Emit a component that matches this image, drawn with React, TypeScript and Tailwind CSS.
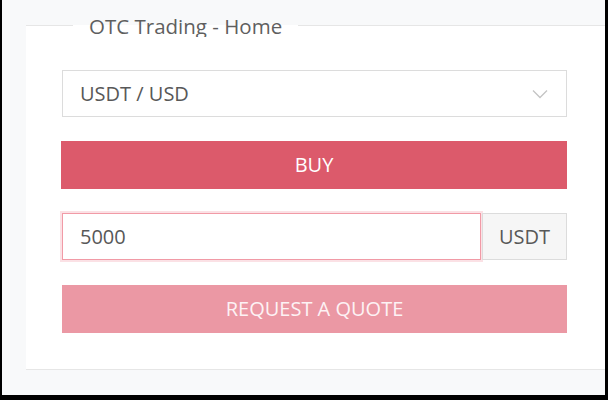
import React from "react";

function Chevron() {
  return (
    <svg width="16" height="10" viewBox="0 0 16 10" fill="none">
      <path d="M1 1.5 L8 8.5 L15 1.5" stroke="#c4c4c4" strokeWidth="1.3" />
    </svg>
  );
}

export default function App() {
  return (
    <div
      className="box-border h-[400px] w-[608px] overflow-hidden border-b-[5px] border-l-2 border-r-[3px] border-black bg-[#f8f9fa]"
      style={{ fontFamily: '"Open Sans", "Liberation Sans", sans-serif' }}
    >
      <div className="pl-[24px] pt-[14px]">
        <fieldset className="m-0 h-[356px] w-[600px] border-0 border-b border-t border-solid border-[#e6e6e6] bg-white px-[36px] pt-[33px]">
          <legend className="ml-[11px] h-[23px] overflow-hidden px-[16px] text-[20.5px] leading-[24px] text-[#5f5f5f]">
            OTC Trading - Home
          </legend>
          <div className="flex w-[505px] flex-col">
            <div className="flex h-[47px] items-center justify-between border border-[#dcdcdc] bg-white pl-[17px] pr-[18px] text-[20px] text-[#585858]">
              <span>USDT / USD</span>
              <Chevron />
            </div>
            <button className="mt-[24px] flex h-[48px] w-[506px] -ml-px items-center justify-center bg-[#dc5a6b] text-[20px] text-white">
              BUY
            </button>
            <div className="mt-[24px] flex h-[47px]">
              <div className="flex w-[419px] items-center border border-[#f19aa6] bg-white pl-[17px] text-[20px] text-[#585858] shadow-[0_0_0_2px_#fbe1e5]">
                5000
              </div>
              <div className="ml-[1px] flex flex-1 items-center justify-center border border-[#dcdcdc] bg-[#f6f6f6] text-[20px] text-[#585858]">
                USDT
              </div>
            </div>
            <button className="mt-[25px] flex h-[48px] items-center justify-center bg-[#eb98a4] text-[20px] text-[#fdf2f4]">
              REQUEST A QUOTE
            </button>
          </div>
        </fieldset>
      </div>
    </div>
  );
}
